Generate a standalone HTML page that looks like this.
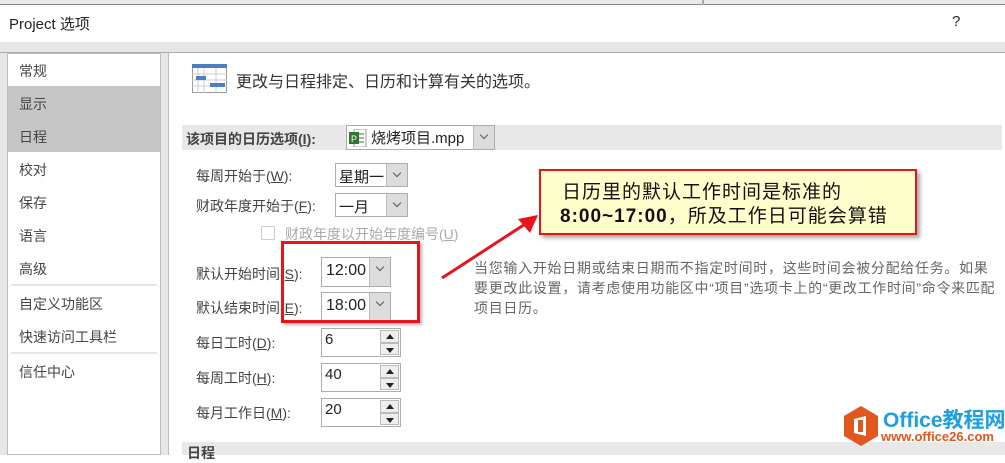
<!DOCTYPE html>
<html><head><meta charset="utf-8"><style>
*{margin:0;padding:0;box-sizing:border-box}
body{width:1005px;height:455px;overflow:hidden;background:#fff;font-family:"Liberation Sans","Noto Sans CJK SC",sans-serif;color:#444;position:relative}
.a{position:absolute;white-space:nowrap}
.nav{font-size:14px;color:#444;left:19px}
.lbl{font-size:14px;color:#444;left:196px}
.u{text-decoration:underline}
.sel{position:absolute;border:1px solid #adadad;background:#fff;font-size:15px;color:#222}
.dd{position:absolute;top:0;bottom:0;right:0;width:21px;background:#dcdcdc;border-left:1px solid #bbb}
.dd:after{content:"";position:absolute;left:7px;top:6px;width:5px;height:5px;border-right:1px solid #555;border-bottom:1px solid #555;transform:rotate(45deg)}
.spin{position:absolute;right:1px;top:1px;width:19px;bottom:1px}
.spin div{height:50%;background:#eee;border:1px solid #bbb;position:relative}
.up:after{content:"";position:absolute;left:5px;top:3px;border:4px solid transparent;border-bottom:5px solid #222;border-top:0}
.dn:after{content:"";position:absolute;left:5px;top:4px;border:4px solid transparent;border-top:5px solid #222;border-bottom:0}
</style></head><body>
<div class="a" style="left:0;top:0;width:1005px;height:5px;background:#eaeaea;border-bottom:1px solid #888"></div>
<div class="a" style="left:702px;top:0;width:2px;height:5px;background:#aaa"></div>
<div class="a" style="left:9px;top:13px;font-size:15px;color:#222">Project 选项</div>
<div class="a" style="left:952px;top:13px;font-size:15px;color:#222">?</div>
<div class="a" style="left:0;top:42px;width:1005px;height:413px;background:#e6e6e6"></div>
<div class="a" style="left:0;top:52px;width:1005px;height:1px;background:#aaa"></div>
<div class="a" style="left:7px;top:53px;width:154px;height:402px;background:#fff;border:1px solid #bdbdbd"></div>
<div class="a" style="left:8px;top:86px;width:152px;height:66px;background:#c6c6c6"></div>
<div class="a nav" style="top:61px">常规</div>
<div class="a nav" style="top:94px">显示</div>
<div class="a nav" style="top:127px">日程</div>
<div class="a nav" style="top:160px">校对</div>
<div class="a nav" style="top:193px">保存</div>
<div class="a nav" style="top:226px">语言</div>
<div class="a nav" style="top:259px">高级</div>
<div class="a" style="left:11px;top:284px;width:146px;height:2px;background:#e6e6e6"></div>
<div class="a nav" style="top:294px">自定义功能区</div>
<div class="a nav" style="top:327px">快速访问工具栏</div>
<div class="a" style="left:11px;top:352px;width:146px;height:2px;background:#e6e6e6"></div>
<div class="a nav" style="top:362px">信任中心</div>
<div class="a" style="left:168px;top:53px;width:837px;height:402px;background:#fff;border-left:1px solid #bdbdbd"></div>
<svg class="a" style="left:192px;top:64px" width="36" height="30"><rect x=".5" y=".5" width="34" height="28" fill="#fff" stroke="#999"/><rect x="0" y="0" width="35" height="4" fill="#4a7fc0"/><path d="M6 4v25M12 4v25M24 4v25M0 10h35M0 16h35M0 22h35" stroke="#ccc"/><rect x="4" y="12" width="10" height="4" fill="#4a7fc0"/><rect x="18" y="19" width="15" height="4" fill="#4a7fc0"/></svg>
<div class="a" style="left:236px;top:68px;font-size:16px;color:#333">更改与日程排定、日历和计算有关的选项。</div>
<div class="a" style="left:182px;top:125px;width:820px;height:25px;background:#e8e8e8"></div>
<div class="a" style="left:186px;top:129px;font-size:14px;font-weight:bold;color:#444">该项目的日历选项(<span class="u">I</span>):</div>
<div class="sel" style="left:346px;top:125px;width:149px;height:25px;font-size:15px;padding:1px 0 0 24px">烧烤项目.mpp<div class="dd"></div></div>
<svg class="a" style="left:349px;top:129px" width="18" height="18"><rect x="5" y="0" width="12" height="18" fill="#fff" stroke="#999"/><path d="M9 5h6M9 9h6M9 13h6" stroke="#31752f"/><rect x="0" y="3" width="10" height="12" fill="#31752f"/><text x="2" y="13" font-size="9" fill="#fff" font-family="Liberation Sans">P</text></svg>
<div class="a lbl" style="top:166px">每周开始于(<span class="u">W</span>):</div>
<div class="sel" style="left:335px;top:163px;width:73px;height:24px;padding:2px 0 0 3px">星期一<div class="dd"></div></div>
<div class="a lbl" style="top:196px">财政年度开始于(<span class="u">F</span>):</div>
<div class="sel" style="left:335px;top:193px;width:73px;height:24px;padding:2px 0 0 3px">一月<div class="dd"></div></div>
<div class="a" style="left:261px;top:226px;width:14px;height:14px;border:1px solid #ccc"></div>
<div class="a" style="left:285px;top:224px;font-size:14px;color:#aaa">财政年度以开始年度编号(<span class="u">U</span>)</div>
<div class="a lbl" style="top:264px">默认开始时间(<span class="u">S</span>):</div>
<div class="sel" style="left:321px;top:257px;width:70px;height:30px;font-size:16px;padding:4px 0 0 4px">12:00<div class="dd"></div></div>
<div class="a lbl" style="top:298px">默认结束时间(<span class="u">E</span>):</div>
<div class="sel" style="left:321px;top:292px;width:70px;height:30px;font-size:16px;padding:4px 0 0 4px">18:00<div class="dd"></div></div>
<div class="a" style="left:281px;top:241px;width:139px;height:82px;border:3px solid #e8141c;box-shadow:2px 2px 3px rgba(0,0,0,.3)"></div>
<div class="a lbl" style="top:333px">每日工时(<span class="u">D</span>):</div>
<div class="sel" style="left:321px;top:328px;width:80px;height:29px;font-size:15px;padding:2px 0 0 3px">6<div class="spin"><div class="up"></div><div class="dn"></div></div></div>
<div class="a lbl" style="top:368px">每周工时(<span class="u">H</span>):</div>
<div class="sel" style="left:321px;top:363px;width:80px;height:29px;font-size:15px;padding:2px 0 0 3px">40<div class="spin"><div class="up"></div><div class="dn"></div></div></div>
<div class="a lbl" style="top:403px">每月工作日(<span class="u">M</span>):</div>
<div class="sel" style="left:321px;top:398px;width:80px;height:29px;font-size:15px;padding:2px 0 0 3px">20<div class="spin"><div class="up"></div><div class="dn"></div></div></div>
<div class="a" style="left:182px;top:442px;width:823px;height:13px;background:#e8e8e8"></div>
<div class="a" style="left:187px;top:443px;font-size:14px;font-weight:bold;color:#444">日程</div>
<div class="a" style="left:474px;top:258px;font-size:14px;line-height:20px;color:#666;white-space:normal;width:528px;letter-spacing:0.7px">当您输入开始日期或结束日期而不指定时间时，这些时间会被分配给任务。如果要更改此设置，请考虑使用功能区中“项目”选项卡上的“更改工作时间”命令来匹配项目日历。</div>
<svg class="a" style="left:438px;top:205px" width="110" height="80"><path d="M4 73L98 12" stroke="#e8141c" stroke-width="3"/><path d="M100 10L80 14L92 28Z" fill="#e8141c"/></svg>
<div class="a" style="left:539px;top:169px;width:378px;height:66px;background:#ffffcc;border:2px solid #e8141c;box-shadow:3px 3px 4px rgba(0,0,0,.35)"></div>
<div class="a" style="left:562px;top:177px;font-size:19px;color:#111;letter-spacing:1px">日历里的默认工作时间是标准的</div>
<div class="a" style="left:560px;top:201px;font-size:19px;color:#111;letter-spacing:1px"><b>8:00~17:00</b>，所及工作日可能会算错</div>
<svg class="a" style="left:842px;top:405px" width="38" height="42"><path d="M19 1L36 11V31L19 41L2 31V11Z" fill="#e2571e"/><path d="M12 14L24 11V31L12 28Z" fill="#fff"/><rect x="16" y="15" width="5" height="12" fill="#e2571e"/></svg>
<div class="a" style="left:883px;top:404px;font-size:21px;font-weight:bold;color:#1ea0e0">Office教程网</div>
<div class="a" style="left:881px;top:429px;font-size:13px;font-weight:bold;color:#e2571e">www.office26.com</div>
</body></html>
